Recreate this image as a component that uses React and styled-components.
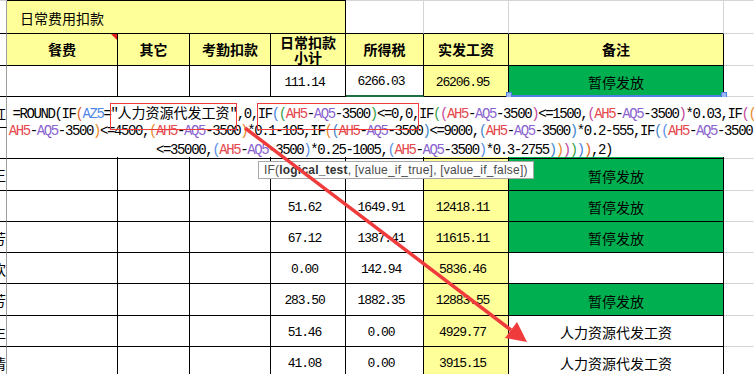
import React, { Fragment } from "react";
import styled, { createGlobalStyle } from "styled-components";

const BLACK = "#000";
const GRID = "#d4d4d4";
const FREEZE = "#9e9e9e";
const YELLOW = "#ffff99";
const GREEN = "#00b050";
const MARK_RED = "#ef3b3b";

const REF_COLORS = { AZ5: "#4f86e8", AH5: "#e5484d", AQ5: "#8a63cf" };
const PAREN_COLORS = [
  "#000",
  "#e2621d",
  "#4a7fe0",
  "#3a9e46",
  "#c2479a",
  "#e8882a",
  "#3f86c9",
  "#5b8de8",
];

const GlobalStyle = createGlobalStyle`
  html, body {
    margin: 0;
    padding: 0;
    background: #fff;
    overflow: hidden;
  }
  #root {
    width: 754px;
    height: 374px;
  }
`;

const Sheet = styled.div`
  position: relative;
  width: 754px;
  height: 374px;
  overflow: hidden;
  font-family: "Noto Sans CJK SC", "Liberation Sans", sans-serif;
  color: #000;
`;

const Grid = styled.div`
  display: grid;
  grid-template-columns: 7px 111px 72px 81px 75px 78px 85px 215px 30px;
  grid-template-rows: 34px 32px 31px 31px 31px 32px 31px 31px 31px 32px 31px 31px;
`;

const Cell = styled.div`
  position: relative;
  box-sizing: border-box;
  display: flex;
  align-items: center;
  justify-content: center;
  min-width: 0;
  background: ${(p) => p.$bg || "#fff"};
  border-right: 1px solid ${(p) => p.$r || GRID};
  border-bottom: ${(p) => p.$bw || 1}px solid ${(p) => p.$b || GRID};
  border-top: ${(p) => (p.$t ? `1px solid ${p.$t}` : "none")};
  font-size: 14px;
`;

const SideCell = styled(Cell)`
  justify-content: flex-end;
  overflow: hidden;
  padding-top: 1px;

  span {
    flex-shrink: 0;
  }
`;

const TitleCell = styled(Cell)`
  grid-column: 2 / 6;
  justify-content: flex-start;
  padding: 1px 0 0 13px;
  font-size: 14px;
`;

const HeadCell = styled(Cell)`
  font-weight: 700;
  line-height: 15px;
  text-align: center;

  ${(p) =>
    p.$comment &&
    `
    &::after {
      content: "";
      position: absolute;
      top: 0;
      right: 0;
      border-top: 6px solid #e01b1b;
      border-left: 6px solid transparent;
    }
  `}
`;

const NumCell = styled(Cell)`
  font-family: "Liberation Mono", monospace;
  font-size: 13px;
  letter-spacing: -1.1px;
  padding: 2px 7px 0 0;
`;

const NoteCell = styled(Cell)`
  padding-top: 2px;

  ${(p) =>
    p.$handles &&
    `
    &::before, &::after {
      content: "";
      position: absolute;
      bottom: -3px;
      width: 4px;
      height: 4px;
      background: #9db9f2;
      border: 1px solid #4f7fe0;
      z-index: 2;
    }
    &::before { left: -3px; }
    &::after { right: -4px; }
  `}
`;

const FormulaBox = styled.div`
  position: absolute;
  left: 7px;
  top: 97px;
  width: 754px;
  height: 60px;
  box-sizing: border-box;
  padding-top: 6px;
  background: #fff;
  font-family: "Liberation Mono", "Noto Sans CJK SC", monospace;
  font-size: 14px;
  letter-spacing: -1.4px;
  z-index: 3;
`;

const FormulaLine = styled.div`
  height: 19px;
  line-height: 19px;
  white-space: nowrap;
  text-align: center;
`;

const Tinted = styled.span`
  color: ${(p) => p.$c};
`;

const Han = styled.span`
  font-family: "Noto Sans CJK SC", sans-serif;
  letter-spacing: 0;
`;

const Mark = styled.span`
  position: relative;

  &::after {
    content: "";
    position: absolute;
    left: -1px;
    right: 0;
    top: -3px;
    bottom: -8px;
    border: 1.5px solid ${MARK_RED};
  }
`;

const Tip = styled.div`
  position: absolute;
  left: 258px;
  top: 161px;
  height: 18px;
  box-sizing: border-box;
  padding: 0 5px;
  border: 1px solid #a8a8a8;
  background: #fff;
  font-family: "Liberation Sans", sans-serif;
  font-size: 12px;
  letter-spacing: 0.2px;
  line-height: 16px;
  color: #4a4a4a;
  white-space: nowrap;
  z-index: 4;

  b {
    color: #333;
  }
`;

const ArrowLayer = styled.svg`
  position: absolute;
  left: 0;
  top: 0;
  width: 754px;
  height: 374px;
  pointer-events: none;
  z-index: 5;
`;

const rows = [
  { side: "", sub: "111.14", tax: "6266.03", net: "26206.95", note: "暂停发放", green: true, selected: true },
  { side: "红", sub: "45.20", tax: "1812.60", net: "12593.40", note: "暂停发放", green: true },
  { side: "", sub: "62.35", tax: "1540.18", net: "11732.66", note: "暂停发放", green: true },
  { side: "王", sub: "74.12", tax: "1725.84", net: "13107.09", note: "暂停发放", green: true },
  { side: "", sub: "51.62", tax: "1649.91", net: "12418.11", note: "暂停发放", green: true },
  { side: "芳", sub: "67.12", tax: "1387.41", net: "11615.11", note: "暂停发放", green: true },
  { side: "欢", sub: "0.00", tax: "142.94", net: "5836.46", note: "", green: false },
  { side: "芳", sub: "283.50", tax: "1882.35", net: "12883.55", note: "暂停发放", green: true },
  { side: "生", sub: "51.46", tax: "0.00", net: "4929.77", note: "人力资源代发工资", green: false },
  { side: "倩", sub: "41.08", tax: "0.00", net: "3915.15", note: "人力资源代发工资", green: false },
];

function paint(text, state) {
  const parts = text.match(/AZ5|AH5|AQ5|[()]|[\u4e00-\u9fff]+|[^()\u4e00-\u9fff]/g);
  return parts.map((t, i) => {
    if (REF_COLORS[t]) {
      return (
        <Tinted key={i} $c={REF_COLORS[t]}>
          {t}
        </Tinted>
      );
    }
    if (t === "(") {
      state.depth += 1;
      return (
        <Tinted key={i} $c={PAREN_COLORS[(state.depth - 1) % 8]}>
          (
        </Tinted>
      );
    }
    if (t === ")") {
      const c = PAREN_COLORS[(state.depth - 1 + 8) % 8];
      state.depth -= 1;
      return (
        <Tinted key={i} $c={c}>
          )
        </Tinted>
      );
    }
    if (/[\u4e00-\u9fff]/.test(t)) return <Han key={i}>{t}</Han>;
    return t;
  });
}

function Formula() {
  const state = { depth: 0 };
  const line1 = [
    paint("=ROUND(IF(AZ5=", state),
    <Mark key="m1">{paint('"人力资源代发工资"', state)}</Mark>,
    paint(",0,", state),
    <Mark key="m2">{paint("IF((AH5-AQ5-3500)<=0,0,", state)}</Mark>,
    paint("IF((AH5-AQ5-3500)<=1500,(AH5-AQ5-3500)*0.03,IF((", state),
  ];
  const line2 = paint(
    "AH5-AQ5-3500)<=4500,(AH5-AQ5-3500)*0.1-105,IF((AH5-AQ5-3500)<=9000,(AH5-AQ5-3500)*0.2-555,IF((AH5-AQ5-3500)",
    state
  );
  const line3 = paint(
    "<=35000,(AH5-AQ5-3500)*0.25-1005,(AH5-AQ5-3500)*0.3-2755)))))),2)",
    state
  );

  return (
    <FormulaBox>
      <FormulaLine>
        {line1.map((part, i) => (
          <Fragment key={i}>{part}</Fragment>
        ))}
      </FormulaLine>
      <FormulaLine>{line2}</FormulaLine>
      <FormulaLine>{line3}</FormulaLine>
    </FormulaBox>
  );
}

function DataRow({ row }) {
  const bottom = row.selected ? "#1f6f43" : BLACK;
  return (
    <>
      <SideCell $r={FREEZE} $b={BLACK}>
        <span>{row.side}</span>
      </SideCell>
      <Cell $r={BLACK} $b={BLACK} />
      <Cell $r={BLACK} $b={BLACK} />
      <Cell $r={BLACK} $b={BLACK} />
      <NumCell $r={BLACK} $b={BLACK}>
        {row.sub}
      </NumCell>
      <NumCell $r={BLACK} $b={bottom} $bw={row.selected ? 2 : 1}>
        {row.tax}
      </NumCell>
      <NumCell $r={BLACK} $b={BLACK} $bg={YELLOW}>
        {row.net}
      </NumCell>
      <NoteCell
        $r={BLACK}
        $b={row.selected ? "#4f7fe0" : BLACK}
        $bw={row.selected ? 2 : 1}
        $bg={row.green ? GREEN : "#fff"}
        $handles={row.selected}
      >
        {row.note}
      </NoteCell>
      <Cell $r="transparent" />
    </>
  );
}

export default function App() {
  return (
    <Sheet>
      <GlobalStyle />
      <Grid>
        <SideCell $r={FREEZE} $b={BLACK} $t={GRID} />
        <TitleCell $r={BLACK} $b={BLACK} $t={BLACK} $bg={YELLOW}>
          日常费用扣款
        </TitleCell>
        <Cell $b={BLACK} $t={GRID} />
        <Cell $b={BLACK} $t={GRID} />
        <Cell $b={BLACK} $t={GRID} />
        <Cell $r="transparent" $t={GRID} />

        <SideCell $r={FREEZE} $b={BLACK} />
        <HeadCell $r={BLACK} $b={BLACK} $bg={YELLOW} $comment>
          餐费
        </HeadCell>
        <HeadCell $r={BLACK} $b={BLACK} $bg={YELLOW}>
          其它
        </HeadCell>
        <HeadCell $r={BLACK} $b={BLACK} $bg={YELLOW}>
          考勤扣款
        </HeadCell>
        <HeadCell $r={BLACK} $b={BLACK} $bg={YELLOW}>
          日常扣款
          <br />
          小计
        </HeadCell>
        <HeadCell $r={BLACK} $b={BLACK} $bg={YELLOW}>
          所得税
        </HeadCell>
        <HeadCell $r={BLACK} $b={BLACK} $bg={YELLOW}>
          实发工资
        </HeadCell>
        <HeadCell $r={BLACK} $b={BLACK} $bg={YELLOW}>
          备注
        </HeadCell>
        <Cell $r="transparent" />

        {rows.map((row, i) => (
          <DataRow key={i} row={row} />
        ))}
      </Grid>

      <Formula />

      <Tip>
        IF(<b>logical_test</b>, [value_if_true], [value_if_false])
      </Tip>

      <ArrowLayer viewBox="0 0 754 374">
        <line x1="245" y1="128" x2="511" y2="330" stroke={MARK_RED} strokeWidth="3.5" />
        <polygon points="527,342 505,338 517,322" fill={MARK_RED} />
      </ArrowLayer>
    </Sheet>
  );
}
